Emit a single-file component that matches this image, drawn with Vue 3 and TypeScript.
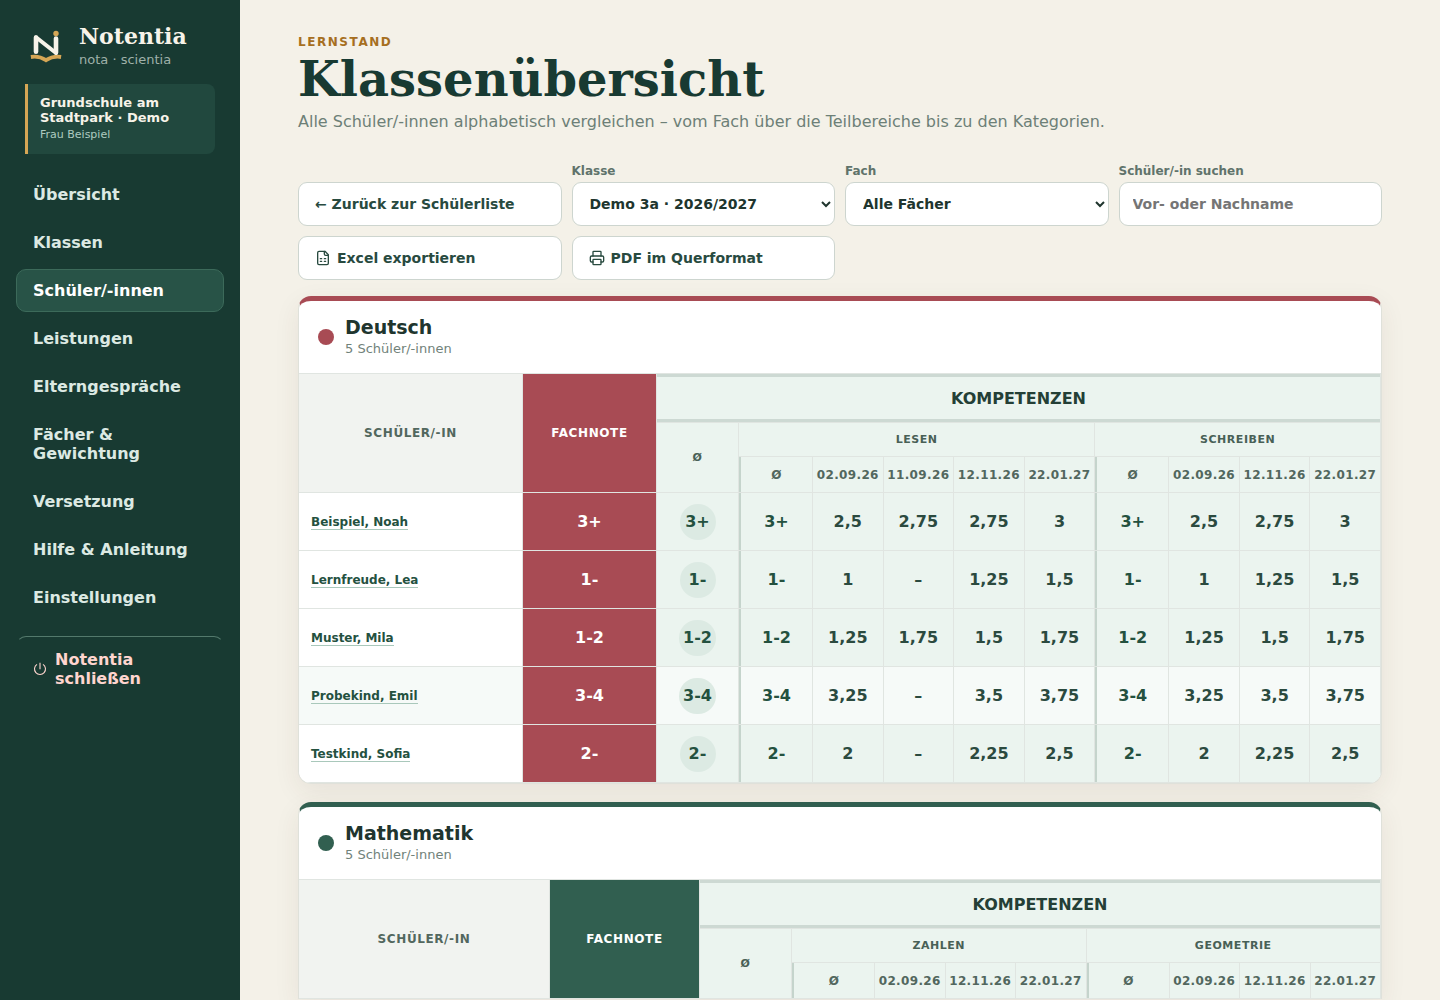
<script setup lang="ts">
import { ref, computed } from 'vue'

interface Area {
  name: string
  dates: string[]
}

interface Row {
  name: string
  grade: string
  areas: string[][]
  soft?: boolean
}

interface Subject {
  id: string
  name: string
  studentCount: number
  widths: { name: number; grade: number; total: number; average: number }
  areas: Area[]
  rows: Row[]
}

const navItems = [
  'Übersicht',
  'Klassen',
  'Schüler/-innen',
  'Leistungen',
  'Elterngespräche',
  'Fächer & Gewichtung',
  'Versetzung',
  'Hilfe & Anleitung',
  'Einstellungen',
]
const activeItem = ref('Schüler/-innen')
const selectedClass = ref('3a')
const selectedSubject = ref('')
const query = ref('')

const subjects: Subject[] = [
  {
    id: 'deutsch',
    name: 'Deutsch',
    studentCount: 5,
    widths: { name: 224, grade: 134, total: 82, average: 74 },
    areas: [
      { name: 'Lesen', dates: ['02.09.26', '11.09.26', '12.11.26', '22.01.27'] },
      { name: 'Schreiben', dates: ['02.09.26', '12.11.26', '22.01.27'] },
    ],
    rows: [
      { name: 'Beispiel, Noah', grade: '3+', areas: [['2,5', '2,75', '2,75', '3'], ['2,5', '2,75', '3']] },
      { name: 'Lernfreude, Lea', grade: '1-', areas: [['1', '–', '1,25', '1,5'], ['1', '1,25', '1,5']] },
      { name: 'Muster, Mila', grade: '1-2', areas: [['1,25', '1,75', '1,5', '1,75'], ['1,25', '1,5', '1,75']] },
      { name: 'Probekind, Emil', grade: '3-4', areas: [['3,25', '–', '3,5', '3,75'], ['3,25', '3,5', '3,75']], soft: true },
      { name: 'Testkind, Sofia', grade: '2-', areas: [['2', '–', '2,25', '2,5'], ['2', '2,25', '2,5']] },
    ],
  },
  {
    id: 'mathematik',
    name: 'Mathematik',
    studentCount: 5,
    widths: { name: 251, grade: 150, total: 92, average: 83 },
    areas: [
      { name: 'Zahlen', dates: ['02.09.26', '12.11.26', '22.01.27'] },
      { name: 'Geometrie', dates: ['02.09.26', '12.11.26', '22.01.27'] },
    ],
    rows: [],
  },
]

const visibleSubjects = computed(() =>
  subjects
    .filter((s) => !selectedSubject.value || s.id === selectedSubject.value)
    .map((s) => ({
      ...s,
      rows: s.rows.filter((r) => r.name.toLowerCase().includes(query.value.toLowerCase())),
    })),
)

const columnCount = (s: Subject) => 1 + s.areas.reduce((n, a) => n + a.dates.length + 1, 0)
</script>

<template>
  <div class="app">
    <aside class="sidebar">
      <div class="brand">
        <svg class="logo" viewBox="0 0 36 36" aria-hidden="true">
          <path d="M2.900 29C8 28.200 12.500 28.600 18 32.200C23.500 28.600 28 28.200 33.100 29" fill="none" stroke="#d5a655" stroke-width="3.800" />
          <path d="M8 23.700V9.500M28 24.500V10.500" fill="none" stroke="#f7f3e9" stroke-width="4.600" stroke-linecap="round" />
          <path d="M8 9.300L28 25" fill="none" stroke="#f7f3e9" stroke-width="4" stroke-linecap="round" />
          <circle cx="28" cy="5.500" r="2.700" fill="#d5a655" />
        </svg>
        <div>
          <div class="brand-name">Notentia</div>
          <div class="brand-claim">nota · scientia</div>
        </div>
      </div>
      <div class="school">
        <strong>Grundschule am Stadtpark · Demo</strong>
        <span>Frau Beispiel</span>
      </div>
      <nav class="nav" aria-label="Hauptnavigation">
        <button
          v-for="item in navItems"
          :key="item"
          type="button"
          :class="['nav-item', { active: item === activeItem }]"
          @click="activeItem = item"
        >{{ item }}</button>
        <button type="button" class="nav-item quit">
          <svg viewBox="0 0 14 14" aria-hidden="true">
            <path d="M7 .800V7.200M4 2.400A5.500 5.500 0 1 0 10 2.400" fill="none" stroke="currentColor" stroke-width="1.100" />
          </svg>
          <span>Notentia schließen</span>
        </button>
      </nav>
    </aside>

    <main class="main">
      <header class="page-head">
        <p class="eyebrow">Lernstand</p>
        <h1>Klassenübersicht</h1>
        <p class="lead">Alle Schüler/-innen alphabetisch vergleichen – vom Fach über die Teilbereiche bis zu den Kategorien.</p>
      </header>

      <section class="filters" aria-label="Filter">
        <button type="button" class="control button">← Zurück zur Schülerliste</button>
        <div class="field">
          <label for="class-select">Klasse</label>
          <select id="class-select" v-model="selectedClass" class="control">
            <option value="3a">Demo 3a · 2026/2027</option>
          </select>
        </div>
        <div class="field">
          <label for="subject-select">Fach</label>
          <select id="subject-select" v-model="selectedSubject" class="control">
            <option value="">Alle Fächer</option>
            <option v-for="s in subjects" :key="s.id" :value="s.id">{{ s.name }}</option>
          </select>
        </div>
        <div class="field">
          <label for="student-search">Schüler/-in suchen</label>
          <input id="student-search" v-model="query" class="control" type="text" placeholder="Vor- oder Nachname" />
        </div>
        <button type="button" class="control button">
          <svg class="icon" viewBox="0 0 24 24" aria-hidden="true">
            <path d="M15 2H6a2 2 0 0 0-2 2v16a2 2 0 0 0 2 2h12a2 2 0 0 0 2-2V7Z" />
            <path d="M14 2v4a2 2 0 0 0 2 2h4M8 13h2M14 13h2M8 17h2M14 17h2" />
          </svg>
          Excel exportieren
        </button>
        <button type="button" class="control button">
          <svg class="icon" viewBox="0 0 24 24" aria-hidden="true">
            <path d="M6 18H4a2 2 0 0 1-2-2v-5a2 2 0 0 1 2-2h16a2 2 0 0 1 2 2v5a2 2 0 0 1-2 2h-2" />
            <path d="M6 9V3a1 1 0 0 1 1-1h10a1 1 0 0 1 1 1v6" />
            <rect x="6" y="14" width="12" height="8" rx="1" />
          </svg>
          PDF im Querformat
        </button>
      </section>

      <section v-for="s in visibleSubjects" :key="s.id" :class="['card', s.id, { open: !s.rows.length }]">
        <header class="card-head">
          <span class="dot"></span>
          <div>
            <h2>{{ s.name }}</h2>
            <p>{{ s.studentCount }} Schüler/-innen</p>
          </div>
        </header>
        <table>
          <colgroup>
            <col :style="{ width: s.widths.name + 'px' }" />
            <col :style="{ width: s.widths.grade + 'px' }" />
            <col :style="{ width: s.widths.total + 'px' }" />
            <template v-for="a in s.areas" :key="a.name">
              <col :style="{ width: s.widths.average + 'px' }" />
              <col v-for="d in a.dates" :key="d" />
            </template>
          </colgroup>
          <thead>
            <tr class="group-row">
              <th rowspan="3" scope="col" class="name-head">Schüler/-in</th>
              <th rowspan="3" scope="col" class="grade">Fachnote</th>
              <th :colspan="columnCount(s)" scope="colgroup" class="group">Kompetenzen</th>
            </tr>
            <tr class="area-row">
              <th rowspan="2" scope="col">Ø</th>
              <th v-for="a in s.areas" :key="a.name" :colspan="a.dates.length + 1" scope="colgroup">{{ a.name }}</th>
            </tr>
            <tr class="date-row">
              <template v-for="a in s.areas" :key="a.name">
                <th scope="col" class="area-start">Ø</th>
                <th v-for="d in a.dates" :key="d" scope="col">{{ d }}</th>
              </template>
            </tr>
          </thead>
          <tbody>
            <tr v-for="r in s.rows" :key="r.name" :class="{ soft: r.soft }">
              <th scope="row" class="student"><a href="#">{{ r.name }}</a></th>
              <td class="grade">{{ r.grade }}</td>
              <td class="total"><span>{{ r.grade }}</span></td>
              <template v-for="(values, i) in r.areas" :key="i">
                <td class="average area-start">{{ r.grade }}</td>
                <td v-for="(v, j) in values" :key="j">{{ v }}</td>
              </template>
            </tr>
          </tbody>
        </table>
      </section>
    </main>
  </div>
</template>

<style>
body {
  margin: 0;
  background: #f4f1e8;
}
</style>

<style scoped>
.app {
  display: flex;
  align-items: stretch;
  min-height: 100vh;
  font-family: "DejaVu Sans", sans-serif;
  color: #20352e;
}

.app * {
  box-sizing: border-box;
}

button,
input,
select {
  font-family: inherit;
}

.sidebar {
  flex: 0 0 240px;
  padding: 22px 16px;
  background: #183a32;
}

.brand {
  display: flex;
  align-items: center;
  gap: 15px;
  padding-left: 12px;
  height: 48px;
}

.logo {
  width: 36px;
  height: 36px;
}

.brand-name {
  font: bold 22px/28px "DejaVu Serif", serif;
  color: #f7f3e9;
}

.brand-claim {
  font-size: 13px;
  line-height: 20px;
  color: #9fb1a9;
}

.school {
  display: flex;
  flex-direction: column;
  gap: 2px;
  margin: 14px 9px 19px;
  padding: 11px 12px;
  border-left: 3px solid #d5a655;
  border-radius: 0 8px 8px 0;
  background: #21483e;
}

.school strong {
  font-size: 13px;
  line-height: 15px;
  color: #f7f3e9;
}

.school span {
  font-size: 11px;
  line-height: 16px;
  color: #aecbc0;
}

.nav {
  display: flex;
  flex-direction: column;
  gap: 5px;
}

.nav-item {
  padding: 11px 16px;
  border: 1px solid transparent;
  border-radius: 10px;
  background: transparent;
  color: #dce9e3;
  font-size: 16px;
  font-weight: bold;
  line-height: 19px;
  text-align: left;
}

.nav-item.active {
  border-color: #3c6a5a;
  background: #285347;
  color: #fff;
}

.nav-item.quit {
  display: flex;
  align-items: center;
  gap: 8px;
  margin-top: 12px;
  padding-top: 13px;
  border-top-color: #53796c;
  color: #ffd5cf;
}

.quit svg {
  flex: none;
  width: 14px;
  height: 14px;
}

.main {
  flex: 1;
  min-width: 0;
  padding: 34px 58px 0;
}

.page-head {
  margin-bottom: 28px;
}

.eyebrow {
  margin: 0;
  color: #a66f1f;
  font-size: 12px;
  font-weight: bold;
  line-height: 16px;
  letter-spacing: 0.13em;
  text-transform: uppercase;
}

h1 {
  margin: 2px 0 4px;
  color: #183a32;
  font: bold 48px/54px "DejaVu Serif", serif;
}

.lead {
  margin: 0;
  color: #6d8077;
  font-size: 16px;
  line-height: 24px;
}

.filters {
  display: grid;
  grid-template-columns: repeat(4, minmax(0, 1fr));
  align-items: end;
  gap: 10px;
  margin-bottom: 16px;
}

.field {
  display: flex;
  flex-direction: column;
  gap: 3px;
  padding-top: 1px;
}

.field label {
  color: #60736b;
  font-size: 12px;
  font-weight: bold;
  line-height: 16px;
}

.control {
  width: 100%;
  height: 44px;
  padding: 0 13px;
  border: 1px solid #cdd5cf;
  border-radius: 9px;
  background: #fff;
  color: #20352e;
  font-size: 14px;
  font-weight: bold;
}

.button {
  display: flex;
  align-items: center;
  gap: 6px;
  padding: 0 16px;
  color: #284a3f;
}

.icon {
  width: 16px;
  height: 16px;
  fill: none;
  stroke: currentColor;
  stroke-width: 2;
  stroke-linecap: round;
  stroke-linejoin: round;
}

.card {
  --accent: #a84b54;
  overflow: hidden;
  margin-bottom: 18px;
  border: 1px solid #dfe1da;
  border-top: 5px solid var(--accent);
  border-radius: 13px;
  background: #fff;
  box-shadow: 0 8px 26px rgba(74, 52, 32, 0.08);
}

.card.mathematik {
  --accent: #315f50;
}

.card.open {
  margin-bottom: 0;
  border-bottom: 0;
  border-radius: 13px 13px 0 0;
}

.card-head {
  display: flex;
  align-items: center;
  gap: 11px;
  height: 73px;
  padding: 0 19px;
  border-bottom: 1px solid #e0e5e1;
}

.dot {
  width: 16px;
  height: 16px;
  border-radius: 50%;
  background: var(--accent);
}

h2 {
  margin: 0;
  font-size: 19px;
  line-height: 23px;
}

.card-head p {
  margin: 0;
  color: #71827a;
  font-size: 13px;
  line-height: 19px;
}

table {
  width: 100%;
  table-layout: fixed;
  border-collapse: separate;
  border-spacing: 0;
}

th,
td {
  padding: 0;
  border-right: 1px solid #e0e5e1;
  border-bottom: 1px solid #e0e5e1;
  background: #ebf4ef;
  text-align: center;
}

thead th {
  color: #52675e;
  font-size: 12px;
  letter-spacing: 0.05em;
  text-transform: uppercase;
}

.group-row {
  height: 49px;
}

.area-row {
  height: 34px;
}

.date-row {
  height: 36px;
}

.area-row th {
  color: #486056;
  font-size: 11px;
}

.date-row th {
  letter-spacing: 0.03em;
  white-space: nowrap;
}

th.name-head {
  background: #f1f3f0;
}

th.group {
  color: #243f36;
  font-size: 16px;
  letter-spacing: 0;
  box-shadow: inset 0 3px #cdd9d3, inset 0 -3px #cdd9d3;
}

.area-start {
  padding-left: 2px;
  box-shadow: inset 2px 0 #c5d4cc;
}

tbody tr {
  height: 58px;
}

tbody td {
  color: #2b4a3f;
  font-size: 16px;
  font-weight: bold;
}

tbody .soft th,
tbody .soft td {
  background: #f6faf8;
}

tbody th.student {
  padding-left: 12px;
  background: #fff;
  font-size: 12px;
  text-align: left;
}

tbody .soft th.student {
  background: #f6faf8;
}

.student a {
  border-bottom: 1px solid #a9c8bb;
  color: #24513f;
  text-decoration: none;
}

thead th.grade,
tbody td.grade {
  background: var(--accent);
  color: #fff;
}

tbody .total,
tbody .average {
  color: #24513f;
}

.total span {
  display: inline-block;
  min-width: 36px;
  padding: 0 4px;
  border-radius: 18px;
  background: #dceae3;
  line-height: 36px;
}
</style>
